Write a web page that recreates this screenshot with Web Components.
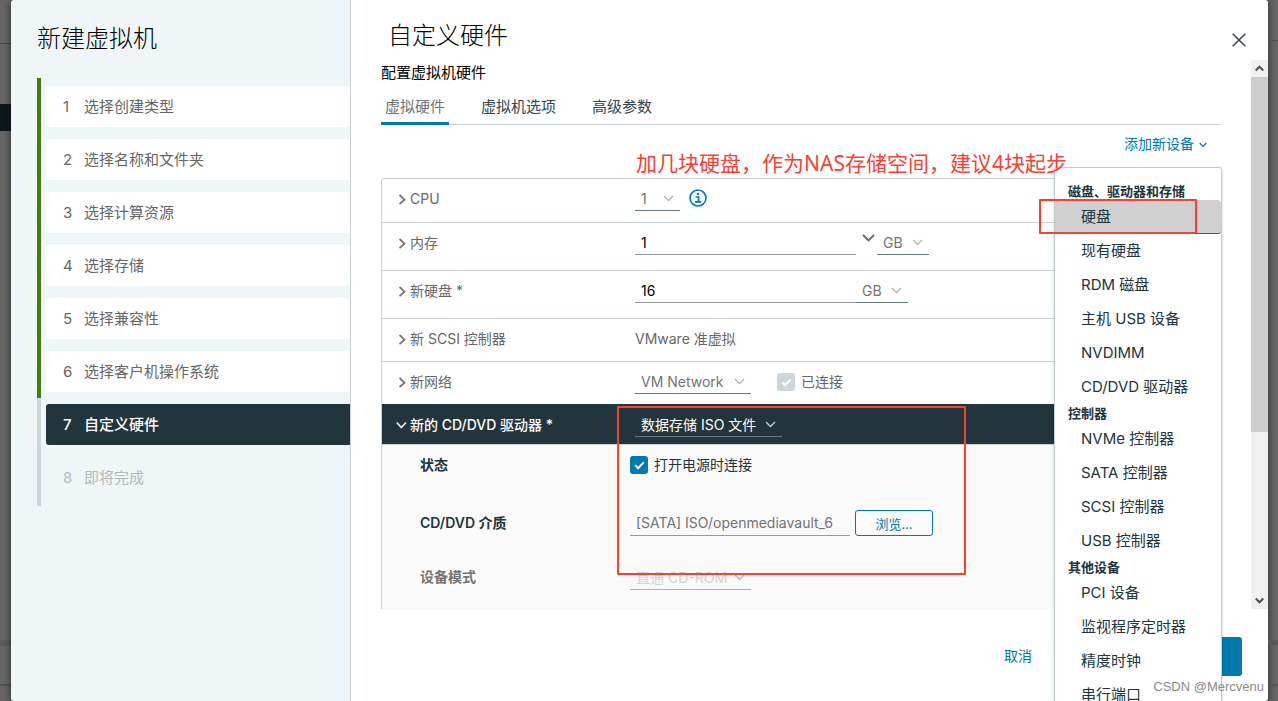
<!DOCTYPE html>
<html lang="zh-CN">
<head>
<meta charset="utf-8">
<title>新建虚拟机</title>
<style>
  body {
    margin: 0;
    font-family: Inter, "Noto Sans CJK SC", sans-serif;
    font-size: 14px;
    line-height: 24px;
    color: #666;
  }
</style>
</head>
<body>
<vm-wizard></vm-wizard>

<script>
const define = (name, html, init) => {
  const template = document.createElement('template');
  template.innerHTML = html;
  customElements.define(name, class extends HTMLElement {
    constructor() {
      super();
      this.attachShadow({ mode: 'open' }).append(template.content.cloneNode(true));
    }
    connectedCallback() {
      if (init) init(this, this.shadowRoot);
    }
  });
};

/* Underlined drop-down; "options" is a |-separated list, the first one is selected. */
define('ui-select', `
<style>
  :host { display: inline-grid; box-sizing: border-box; flex: none; height: 24px; color: #737373; --line: #6a7a81; --arrow: #b3b3b3; border-bottom: 1px solid var(--line); }
  :host([tone=dark]) { color: #fff; --arrow: #c9d0d3; }
  :host([off]) { color: #cdd4d7; --line: #b0b0b0; }
  select { grid-area: 1 / 1; width: 100%; min-width: 0; height: 23px; box-sizing: border-box; appearance: none; background: none; border: 0; margin: 0; padding: 0 0 0 6px; color: inherit; font: inherit; line-height: 23px; opacity: 1; outline: 0; }
  option { color: #333; }
  svg { grid-area: 1 / 1; justify-self: end; align-self: center; margin-right: 6px; fill: none; stroke: var(--arrow); stroke-width: 1.3; pointer-events: none; }
</style>
<select></select>
<svg width="11" height="7" viewBox="0 0 11 7"><path d="M1 1l4.5 4.5L10 1"/></svg>`,
(host, root) => {
  const select = root.querySelector('select');
  select.setAttribute('aria-label', host.getAttribute('label'));
  select.disabled = host.hasAttribute('off');
  select.replaceChildren(...host.getAttribute('options').split('|').map(text => new Option(text)));
});

define('ui-check', `
<style>
  :host { display: inline-block; color: #666; }
  label { display: flex; align-items: center; gap: 6px; }
  input { appearance: none; display: grid; place-items: center; flex: none; width: 18px; height: 18px; margin: 0; border-radius: 3px; background: #0079ad; }
  input:checked::after { content: ""; box-sizing: border-box; width: 9px; height: 5px; border: solid #fff; border-width: 0 0 2px 2px; transform: translateY(-1px) rotate(-45deg); }
  input:disabled { background: #ccd5d9; }
</style>
<label><input type="checkbox" checked><span><slot></slot></span></label>`,
(host, root) => { root.querySelector('input').disabled = host.hasAttribute('off'); });

/* One line of the hardware list: an expandable name and its value controls. */
define('hw-row', `
<style>
  :host { display: grid; grid-template-columns: 239px 1fr; box-sizing: border-box; padding: 8px 0 0 14px; border-top: 1px solid #c9d3d7; min-height: 43px; }
  :host(.tall) { min-height: 48px; }
  :host(:first-of-type) { border-top: 0; }
  :host([open]) { background: #22343c; color: #fff; min-height: 40px; border-top-color: #22343c; }
  button { display: flex; align-items: center; gap: 2px; height: 24px; padding: 0; border: 0; background: none; color: inherit; font: inherit; white-space: nowrap; }
  :host([open]) button { font-weight: 500; }
  svg { fill: none; stroke: #737373; stroke-width: 1.8; }
  :host([open]) svg { stroke: #e8ecee; transform: rotate(90deg); }
  .value { display: flex; height: 24px; min-width: 0; }
</style>
<button type="button"><svg width="12" height="12" viewBox="0 0 12 12"><path d="M3.5 2L8.5 6.7L3.5 11.2"/></svg><span></span></button>
<div class="value"><slot></slot></div>`,
(host, root) => {
  root.querySelector('span').textContent = host.getAttribute('name');
  root.querySelector('button').setAttribute('aria-expanded', host.hasAttribute('open'));
});

define('wizard-step', `
<style>
  :host { display: block; padding: 6px 0; border-left: 4px solid #43810f; font-size: 15px; color: #666; }
  :host(:first-of-type) { padding-top: 8px; }
  :host(:last-of-type) { padding-bottom: 8px; }
  :host([state=current]), :host([state=next]) { border-color: #ccd5d9; }
  button { display: flex; width: calc(100% - 5px); height: 41px; margin-left: 5px; align-items: center; padding: 0 0 0 17px; border: 0; border-radius: 3px; background: #fff; color: inherit; font: inherit; text-align: left; }
  :host([state=current]) button { background: #22343c; color: #fff; font-weight: 500; border-radius: 3px 0 0 3px; }
  :host([state=next]) button { background: none; color: #b3b9bb; }
  .no { width: 21px; }
</style>
<button type="button"><span class="no"></span><slot></slot></button>`,
(host, root) => {
  root.querySelector('.no').textContent = host.getAttribute('no');
  root.querySelector('button').disabled = host.getAttribute('state') === 'next';
});

define('wizard-nav', `
<style>
  :host { display: block; background: #f0f5f8; border-right: 1px solid #c9d3d7; padding: 21px 0 0 26px; border-radius: 3px 0 0 3px; }
  h1 { margin: 0 0 21px; font-size: 24px; line-height: 36px; font-weight: 300; color: #000; }
</style>
<h1>新建虚拟机</h1>
<nav aria-label="步骤">
  <wizard-step no="1">选择创建类型</wizard-step>
  <wizard-step no="2">选择名称和文件夹</wizard-step>
  <wizard-step no="3">选择计算资源</wizard-step>
  <wizard-step no="4">选择存储</wizard-step>
  <wizard-step no="5">选择兼容性</wizard-step>
  <wizard-step no="6">选择客户机操作系统</wizard-step>
  <wizard-step no="7" state="current">自定义硬件</wizard-step>
  <wizard-step no="8" state="next">即将完成</wizard-step>
</nav>`);

define('page-tabs', `
<style>
  :host { display: flex; gap: 28px; border-bottom: 1px solid #c9d3d7; height: 35px; font-size: 15px; }
  button { box-sizing: border-box; height: 36px; padding: 3px 4px 0; border: 0; border-bottom: 3px solid transparent; background: none; color: #33454e; font: inherit; }
  [aria-selected=true] { color: #737373; border-color: #0079ad; }
</style>
<button type="button" role="tab" aria-selected="true">虚拟硬件</button>
<button type="button" role="tab" aria-selected="false">虚拟机选项</button>
<button type="button" role="tab" aria-selected="false">高级参数</button>`,
host => host.setAttribute('role', 'tablist'));

define('hw-details', `
<style>
  :host { display: block; padding: 7px 0 20px 38px; border-top: 1px solid #c9d3d7; background: #fafafa; color: #22343c; }
  .row { display: grid; grid-template-columns: 210px 1fr; align-items: start; min-height: 58px; line-height: 26px; }
  .name { font-weight: 600; }
  .muted { font-weight: 600; color: #737373; line-height: 22px; }
  .field { display: flex; gap: 5px; align-items: stretch; height: 26px; }
  input { box-sizing: border-box; width: 220px; padding: 0 6px; border: 0; border-bottom: 1px solid #999; background: none; color: #737373; font: inherit; outline: 0; }
  button { width: 78px; border: 1px solid #0079ad; border-radius: 3px; background: none; color: #0079ad; font: inherit; font-size: 13px; padding: 0; }
  ui-select { width: 121px; }
  .last { min-height: 56px; }
</style>
<div class="row"><span class="name">状态</span><ui-check style="color:#22343c">打开电源时连接</ui-check></div>
<div class="row last"><label class="name" for="media">CD/DVD 介质</label><div class="field"><input id="media" value="[SATA] ISO/openmediavault_6" readonly><button type="button">浏览...</button></div></div>
<div class="row"><span class="muted">设备模式</span><ui-select off label="设备模式" options="直通 CD-ROM"></ui-select></div>`);

define('hw-list', `
<style>
  :host { display: block; border: 1px solid #c9d3d7; border-radius: 3px 3px 0 0; }
  input { box-sizing: border-box; width: 221px; height: 24px; padding: 0 6px; border: 0; border-bottom: 1px solid #999; background: none; color: #000; font: inherit; outline: 0; }
  .cpu { width: 45px; } .unit { width: 52px; } .net { width: 116px; } .iso { width: 147px; }
  .info { display: grid; place-items: center; width: 18px; height: 22px; margin-left: 9px; padding: 0; border: 0; background: none; }
  .more { display: flex; width: 21px; height: 14px; padding: 0 2px 0 6px; border: 0; background: none; align-items: center; }
  ui-check { margin-left: 26px; }
  svg { fill: none; flex: none; }
</style>
<hw-row name="CPU">
  <ui-select class="cpu" label="CPU" options="1|2|4"></ui-select>
  <button class="info" type="button" aria-label="CPU 信息"><svg width="18" height="18" viewBox="0 0 18 18" stroke="#0079ad"><circle cx="9" cy="9" r="8" stroke-width="1.6"/><path d="M6.5 8H9.5V12.7M6 12.9H12.3" stroke-width="1.7"/><circle cx="9" cy="4.9" r="1.2" fill="#0079ad" stroke="none"/></svg></button>
</hw-row>
<hw-row name="内存" class="tall">
  <input aria-label="内存" value="1">
  <button class="more" type="button" aria-label="更多内存大小"><svg width="13" height="8" viewBox="0 0 13 8" stroke="#666" stroke-width="1.8"><path d="M1 1l5.5 5.5L12 1"/></svg></button>
  <ui-select class="unit" label="内存单位" options="GB|MB"></ui-select>
</hw-row>
<hw-row name="新硬盘 *" class="tall">
  <input aria-label="新硬盘" value="16">
  <ui-select class="unit" label="硬盘单位" options="GB|MB|TB"></ui-select>
</hw-row>
<hw-row name="新 SCSI 控制器">VMware 准虚拟</hw-row>
<hw-row name="新网络">
  <ui-select class="net" label="新网络" options="VM Network"></ui-select>
  <ui-check off>已连接</ui-check>
</hw-row>
<hw-row name="新的 CD/DVD 驱动器 *" open>
  <ui-select class="iso" tone="dark" label="新的 CD/DVD 驱动器" options="数据存储 ISO 文件"></ui-select>
</hw-row>
<hw-details></hw-details>`);

define('scroll-bar', `
<style>
  :host { display: grid; grid-template-rows: 17px 1fr 17px; width: 17px; background: #f0f0f0; }
  svg { fill: none; stroke: #505050; stroke-width: 2; place-self: center; }
  .track { display: grid; grid-template-rows: 69% 1fr; }
  .thumb { background: #cdcdcd; }
</style>
<svg width="9" height="7" viewBox="0 0 9 7"><path d="M.7 5.5L4.5 1.7L8.3 5.5"/></svg>
<div class="track"><div class="thumb"></div></div>
<svg width="9" height="7" viewBox="0 0 9 7"><path d="M.7 1.5L4.5 5.3L8.3 1.5"/></svg>`,
host => host.setAttribute('aria-hidden', 'true'));

define('device-menu', `
<style>
  :host { display: block; box-sizing: border-box; width: 168px; overflow: hidden; padding-top: 14px; border: 1px solid #c2cdd2; border-bottom: 0; border-radius: 3px 3px 0 0; background: #fff; color: #22343c; box-shadow: 0 1px 3px rgba(0,0,0,.2); font-size: 15px; }
  h4 { margin: 0; padding-left: 13px; font-size: 13px; line-height: 18px; font-weight: 700; white-space: nowrap; }
  button { display: block; box-sizing: border-box; width: 100%; height: 34px; padding: 0 0 0 26px; border: 0; background: none; color: inherit; font: inherit; line-height: 34px; text-align: left; white-space: nowrap; }
  .hover { background: #d0d0d0; border-bottom: 1px solid #555; border-radius: 3px; }
</style>
<h4>磁盘、驱动器和存储</h4>
<button type="button" role="menuitem" class="hover">硬盘</button>
<button type="button" role="menuitem">现有硬盘</button>
<button type="button" role="menuitem">RDM 磁盘</button>
<button type="button" role="menuitem">主机 USB 设备</button>
<button type="button" role="menuitem">NVDIMM</button>
<button type="button" role="menuitem">CD/DVD 驱动器</button>
<h4>控制器</h4>
<button type="button" role="menuitem">NVMe 控制器</button>
<button type="button" role="menuitem">SATA 控制器</button>
<button type="button" role="menuitem">SCSI 控制器</button>
<button type="button" role="menuitem">USB 控制器</button>
<h4>其他设备</h4>
<button type="button" role="menuitem">PCI 设备</button>
<button type="button" role="menuitem">监视程序定时器</button>
<button type="button" role="menuitem">精度时钟</button>
<button type="button" role="menuitem">串行端口</button>`,
host => host.setAttribute('role', 'menu'));

define('hardware-page', `
<style>
  :host { position: relative; display: grid; grid-template-rows: 60px minmax(0, 1fr) 92px; min-width: 0; background: #fff; border-radius: 0 3px 3px 0; overflow: hidden; }
  header { display: flex; justify-content: space-between; align-items: center; padding: 12px 20px 0 37px; }
  h2 { margin: 0; font-size: 24px; line-height: 48px; font-weight: 300; color: #000; }
  header button { display: grid; place-items: center; width: 18px; height: 18px; margin-top: 8px; padding: 0; border: 0; background: none; }
  .view { display: grid; grid-template-columns: minmax(0, 1fr) 17px; min-height: 0; }
  .content { overflow: hidden; padding: 0 30px; }
  p { margin: 0 0 4px; font-size: 15px; line-height: 25px; color: #000; }
  .bar { display: flex; justify-content: flex-end; height: 38px; padding: 0 14px 15px 0; }
  .add { display: flex; align-items: center; gap: 5px; padding: 0; border: 0; background: none; color: #0079ad; font: inherit; }
  footer { display: flex; justify-content: space-between; align-items: center; padding: 2px 26px 0 653px; }
  footer button { border: 0; border-radius: 3px; background: none; color: #0079ad; font: inherit; padding: 0; }
  footer .next { width: 90px; height: 39px; background: #0079ad; }
  svg { fill: none; stroke: #33454e; }
  .add svg { stroke: #0079ad; margin-top: 2px; }
  device-menu { position: absolute; top: 167px; right: 46px; bottom: 0; }
  .mark { position: absolute; box-sizing: border-box; border: 2px solid #f44336; border-radius: 1px; pointer-events: none; }
  .disk { top: 199px; right: 71px; width: 158px; height: 35px; }
  .media { top: 406px; left: 266px; width: 349px; height: 169px; }
  .note { position: absolute; top: 147px; left: 285px; font: 21px/32px "Noto Sans", "Noto Sans CJK SC", sans-serif; color: #f44336; white-space: nowrap; }
</style>
<header>
  <h2>自定义硬件</h2>
  <button type="button" aria-label="关闭"><svg width="14" height="14" viewBox="0 0 14 14" stroke-width="1.5"><path d="M.7.7L13.3 13.3M13.3.7L.7 13.3"/></svg></button>
</header>
<div class="view">
  <div class="content">
    <p>配置虚拟机硬件</p>
    <page-tabs></page-tabs>
    <div class="bar"><button class="add" type="button" aria-haspopup="menu">添加新设备<svg width="8" height="6" viewBox="0 0 8 6" stroke-width="1.3"><path d="M.7 1L4 4.4L7.3 1"/></svg></button></div>
    <hw-list></hw-list>
  </div>
  <scroll-bar></scroll-bar>
</div>
<footer><button type="button">取消</button><button class="next" type="button" aria-label="下一页"></button></footer>
<device-menu></device-menu>
<div class="mark disk"></div>
<div class="mark media"></div>
<div class="note">加几块硬盘，作为NAS存储空间，建议4块起步</div>`);

define('vm-wizard', `
<style>
  :host {
    position: relative; display: grid; grid-template-columns: 11px minmax(0, 1fr) 10px; height: 100vh; min-height: 600px; overflow: hidden;
    background-color: #666;
  }
  .left { background: linear-gradient(#0000 43px, #4c4c4c 43px 44px, #0000 44px 104px, #0e191d 104px 131px, #0000 131px 640px, #5c5c5c 640px 646px, #0000 646px 684px, #4d5556 684px 686px, #0000 686px); }
  .right { background: linear-gradient(#0000 40px, #505050 40px 41px, #0000 41px 640px, #555 640px 645px, #0000 645px 684px, #505858 684px 686px, #0000 686px); }
  .dialog { display: grid; grid-template-columns: 340px minmax(0, 1fr); box-shadow: 0 1px 8px rgba(0,0,0,.6); border-radius: 3px; min-height: 0; }
  wizard-nav { box-sizing: border-box; }
  .credit { position: absolute; right: 14px; bottom: 4px; font: 13px/20px "Liberation Sans", sans-serif; color: #8a8a8a; }
</style>
<div class="left"></div>
<div class="dialog" role="dialog" aria-label="新建虚拟机"><wizard-nav></wizard-nav><hardware-page></hardware-page></div>
<div class="right"></div>
<span class="credit">CSDN @Mercvenu</span>`);
</script>
</body>
</html>
